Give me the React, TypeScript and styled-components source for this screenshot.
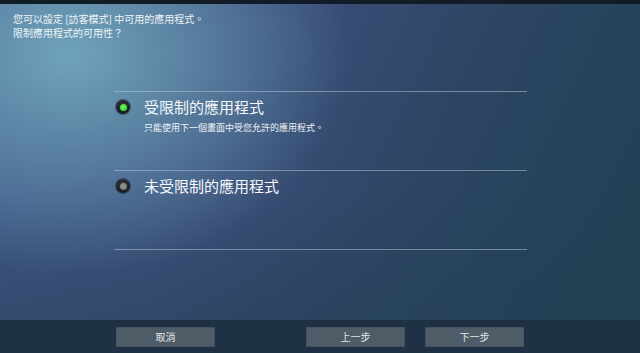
import styled, { createGlobalStyle } from "styled-components";

const GlobalStyle = createGlobalStyle`
  html, body {
    margin: 0;
    padding: 0;
    background: #1f3245;
  }
  * {
    box-sizing: border-box;
  }
`;

const FONT = `"Noto Sans CJK TC", "Noto Sans", sans-serif`;

const S = {
  Screen: styled.div`
    width: 640px;
    height: 353px;
    display: flex;
    flex-direction: column;
    overflow: hidden;
    font-family: ${FONT};
    color: #f2f4f6;
    background:
      radial-gradient(
        ellipse 280px 220px at 70px 55px,
        rgba(116, 172, 192, 0.9),
        rgba(116, 172, 192, 0) 100%
      ),
      linear-gradient(
        to bottom,
        rgba(36, 64, 84, 0) 55%,
        rgba(36, 64, 84, 0.55) 100%
      ),
      linear-gradient(
        115deg,
        #41598a 0%,
        #3c4f7c 35%,
        #2f4767 58%,
        #27435b 78%,
        #233f52 100%
      );
  `,
  TopBar: styled.div`
    height: 4px;
    flex-shrink: 0;
    background: #111c26;
  `,
  Main: styled.div`
    flex: 1;
    display: flex;
    flex-direction: column;
    padding: 8px 0 0 13px;
  `,
  Intro: styled.p`
    margin: 0;
    font-size: 10px;
    line-height: 14px;
    color: #f0f4f6;
  `,
  Options: styled.div`
    width: 413px;
    margin: 51px 0 0 101px;
    border-bottom: 1px solid rgba(180, 195, 210, 0.55);
  `,
  Option: styled.div`
    height: 79px;
    border-top: 1px solid rgba(180, 195, 210, 0.55);
    display: grid;
    grid-template-columns: 14px 1fr;
    column-gap: 14px;
    align-content: start;
    padding: 5px 0 0 2px;
  `,
  Radio: styled.span<{ $checked?: boolean }>`
    width: 14px;
    height: 14px;
    margin-top: 3px;
    border-radius: 50%;
    background: radial-gradient(circle at 50% 40%, #3a3f44, #15191c 75%);
    box-shadow: 0 0 0 1px rgba(0, 0, 0, 0.35);
    display: flex;
    align-items: center;
    justify-content: center;

    &::after {
      content: "";
      width: 7px;
      height: 7px;
      border-radius: 50%;
      background: ${({ $checked }) =>
        $checked
          ? "radial-gradient(circle at 45% 40%, #6cff5c, #27c51f)"
          : "radial-gradient(circle at 45% 40%, #9a9a9a, #6a6a6a)"};
    }
  `,
  Text: styled.div`
    display: flex;
    flex-direction: column;
  `,
  Title: styled.div`
    font-size: 15px;
    line-height: 20px;
    color: #f6f8fa;
  `,
  Desc: styled.div`
    margin-top: 5px;
    font-size: 9px;
    line-height: 12px;
    color: #eef2f5;
  `,
  Footer: styled.div`
    height: 33px;
    flex-shrink: 0;
    background: #1f3245;
    display: flex;
    justify-content: space-between;
    align-items: flex-start;
    padding: 7px 116px 0 116px;
  `,
  Group: styled.div`
    display: flex;
    gap: 20px;
  `,
  Button: styled.button`
    width: 99px;
    height: 20px;
    padding: 0;
    border: 1px solid #46535d;
    background: #4e5c67;
    color: #e2e5e7;
    font-family: ${FONT};
    font-size: 10px;
    line-height: 18px;
  `,
};

const options = [
  {
    title: "受限制的應用程式",
    desc: "只能使用下一個畫面中受您允許的應用程式。",
    checked: true,
  },
  { title: "未受限制的應用程式", checked: false },
];

export default function App() {
  return (
    <>
      <GlobalStyle />
      <S.Screen>
        <S.TopBar />
        <S.Main>
          <S.Intro>
            您可以設定 [訪客模式] 中可用的應用程式。
            <br />
            限制應用程式的可用性？
          </S.Intro>
          <S.Options>
            {options.map((o) => (
              <S.Option key={o.title}>
                <S.Radio $checked={o.checked} />
                <S.Text>
                  <S.Title>{o.title}</S.Title>
                  {o.desc && <S.Desc>{o.desc}</S.Desc>}
                </S.Text>
              </S.Option>
            ))}
          </S.Options>
        </S.Main>
        <S.Footer>
          <S.Button>取消</S.Button>
          <S.Group>
            <S.Button>上一步</S.Button>
            <S.Button>下一步</S.Button>
          </S.Group>
        </S.Footer>
      </S.Screen>
    </>
  );
}
